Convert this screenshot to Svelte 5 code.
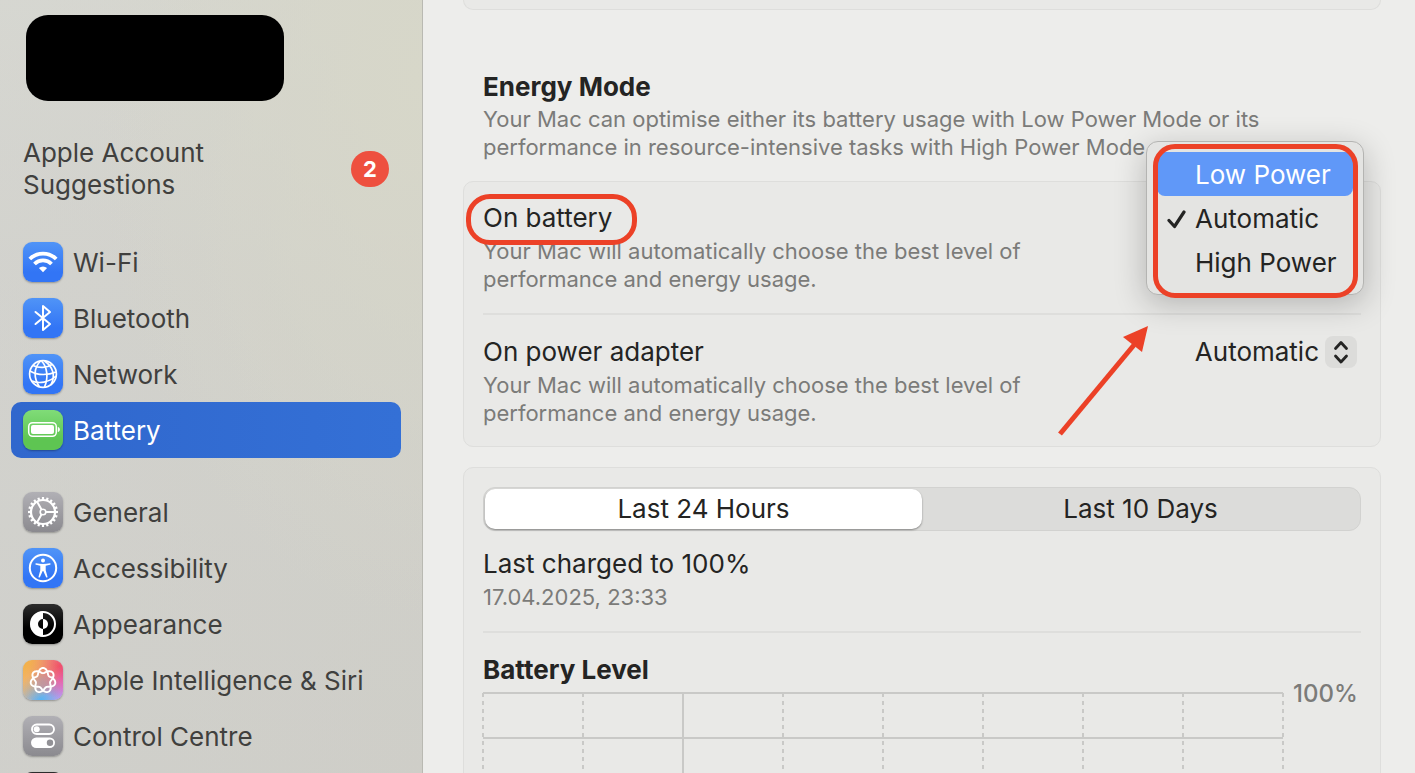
<script lang="ts">
	interface Item {
		id: string;
		label: string;
		tone: string;
	}

	const groups: Item[][] = [
		[
			{ id: 'wifi', label: 'Wi-Fi', tone: 'blue' },
			{ id: 'bluetooth', label: 'Bluetooth', tone: 'blue' },
			{ id: 'network', label: 'Network', tone: 'blue' },
			{ id: 'battery', label: 'Battery', tone: 'green' },
		],
		[
			{ id: 'general', label: 'General', tone: 'grey' },
			{ id: 'accessibility', label: 'Accessibility', tone: 'blue' },
			{ id: 'appearance', label: 'Appearance', tone: 'black' },
			{ id: 'siri', label: 'Apple Intelligence & Siri', tone: 'rainbow' },
			{ id: 'control', label: 'Control Centre', tone: 'grey' },
			{ id: 'more', label: '', tone: 'black' },
		],
	];

	const modes = ['Low Power', 'Automatic', 'High Power'];
	const ranges = ['Last 24 Hours', 'Last 10 Days'];
	const columns = [0, 1, 2, 3, 4, 5, 6, 7, 8];

	let current = $state('battery');
	let batteryMode = $state('Automatic');
	let adapterMode = $state('Automatic');
	let highlighted = $state('Low Power');
	let range = $state('Last 24 Hours');

	// seven-lobed knot, wound twice round the centre
	const knot =
		Array.from({ length: 281 }, (_, i) => {
			const t = (i / 280) * Math.PI * 4;
			const r = 9.9 + 2.6 * Math.cos(3.5 * t);
			const a = t - Math.PI / 2;
			return `${i ? 'L' : 'M'}${(20 + r * Math.cos(a)).toFixed(2)} ${(20.5 + r * Math.sin(a)).toFixed(2)}`;
		}).join('') + 'Z';

	const teeth = Array.from({ length: 20 }, (_, i) => i * 18);
</script>

{#snippet glyph(id: string)}
	<svg viewBox="0 0 40 40" fill="none" stroke="#fff" stroke-width="2" aria-hidden="true">
		{#if id === 'wifi'}
			<path d="M6.800 17a18.700 18.700 0 0 1 26.400 0" stroke-width="3.800" />
			<path d="M11.500 22a12 12 0 0 1 17 0" stroke-width="3.800" />
			<path d="M15.900 26a6 6 0 0 1 8.200 0L20 30.200Z" fill="#fff" stroke="none" />
		{:else if id === 'bluetooth'}
			<path d="M12.500 14 27 26 20 32V8l7 6-14.500 12" stroke-width="2" stroke-linejoin="round" stroke-linecap="round" />
		{:else if id === 'network'}
			<g stroke-width="1.700">
				<circle cx="20" cy="20" r="13.400" />
				<path d="M17.500 7c-7 7-7 17-1 26M18.500 7c6 6 7 17 3 26M21.500 7c9 6 11 15 6.500 24" />
				<path d="M10 11.500c6 3 14 2.500 19-1M7 17c8 5 19 4 26 1M9 27c7 3 17 1.500 24-5" />
			</g>
		{:else if id === 'battery'}
			<rect x="5.700" y="12.700" width="27.600" height="13.600" rx="4" stroke-width="1.500" />
			<rect x="8" y="15" width="23" height="9" rx="2" fill="#fff" stroke="none" />
			<path d="M34.800 17c2.800.5 2.800 4.500 0 5Z" fill="#fff" stroke="none" />
		{:else if id === 'general'}
			<circle cx="20" cy="20" r="12" stroke-width="2.200" />
			{#each teeth as angle}
				<path d="M20 5V8" stroke-width="2.200" transform="rotate({angle} 20 20)" />
			{/each}
			<circle cx="20" cy="20" r="2.800" stroke-width="1.600" />
			<path d="M23 20h9M18.500 17.400 14 9.600M18.500 22.600 14 30.400" stroke-width="2" />
		{:else if id === 'accessibility'}
			<circle cx="20" cy="20" r="13.200" stroke-width="2" />
			<circle cx="20" cy="12.600" r="2" fill="#fff" stroke="none" />
			<path d="M13 15.200c4.500 1 9.500 1 14 0 .8 0 .8 1.300 0 1.500l-4.300 1v4.500l1.800 6.500c.1 1-1.100 1.200-1.500.3L20.300 23h-.6L17 29c-.4.9-1.600.7-1.500-.3l1.800-6.500v-4.500l-4.300-1c-.8-.2-.8-1.500 0-1.500Z" fill="#fff" stroke="none" />
		{:else if id === 'appearance'}
			<circle cx="20" cy="20" r="12" stroke-width="2" />
			<path d="M20 7.500a12.500 12.500 0 0 0 0 25V25a5 5 0 0 1 0-10Z" fill="#fff" stroke="none" />
			<path d="M20 15a5 5 0 0 1 0 10Z" fill="#fff" stroke="none" />
		{:else if id === 'siri'}
			<path d={knot} stroke-width="1.900" />
		{:else if id === 'control'}
			<rect x="9" y="8.500" width="22" height="9.500" rx="4.750" stroke-width="1.900" />
			<circle cx="13.700" cy="13.200" r="3" fill="#fff" stroke="none" />
			<rect x="8" y="21.500" width="24" height="10.500" rx="5.250" fill="#fff" stroke="none" />
			<circle cx="27" cy="26.700" r="3.200" fill="#929196" stroke="none" />
		{/if}
	</svg>
{/snippet}

<div class="window">
	<aside class="sidebar">
		<div class="account"></div>

		<a class="suggestions" href="#suggestions">
			<span>Apple Account<br />Suggestions</span>
			<span class="badge">2</span>
		</a>

		<nav>
			{#each groups as group}
				<ul>
					{#each group as item}
						<li>
							<a
								class="item"
								class:item--active={current === item.id}
								href="#{item.id}"
								aria-label={item.label || 'More'}
								onclick={() => (current = item.id)}
							>
								<span class="icon icon--{item.tone}">{@render glyph(item.id)}</span>
								<span class="item__label">{item.label}</span>
							</a>
						</li>
					{/each}
				</ul>
			{/each}
		</nav>
	</aside>

	<main class="content">
		<section class="card card--tail"></section>

		<header class="intro">
			<h2>Energy Mode</h2>
			<p class="note">
				Your Mac can optimise either its battery usage with Low Power Mode or its performance in
				resource-intensive tasks with High Power Mode.
			</p>
		</header>

		<section class="card">
			<div class="row">
				<div class="row__text">
					<h3 class="ring">On battery</h3>
					<p class="note">Your Mac will automatically choose the best level of performance and energy usage.</p>
				</div>
				<div class="menu" role="menu" aria-label="On battery">
					{#each modes as mode}
						<button
							class="menu__item"
							class:menu__item--on={highlighted === mode}
							type="button"
							role="menuitemradio"
							aria-checked={batteryMode === mode}
							onmouseenter={() => (highlighted = mode)}
							onclick={() => (batteryMode = mode)}
						>
							<svg viewBox="0 0 20 20" fill="none" aria-hidden="true">
								{#if batteryMode === mode}
									<path d="M2 11.500 7.500 17.500 17 3" stroke="currentColor" stroke-width="3.200" stroke-linecap="round" stroke-linejoin="round" />
								{/if}
							</svg>
							{mode}
						</button>
					{/each}
				</div>
			</div>

			<div class="row">
				<div class="row__text">
					<h3><label for="adapter">On power adapter</label></h3>
					<p class="note">Your Mac will automatically choose the best level of performance and energy usage.</p>
				</div>
				<div class="picker">
					<select id="adapter" bind:value={adapterMode}>
						{#each modes as mode}
							<option>{mode}</option>
						{/each}
					</select>
					<svg class="picker__arrows" viewBox="0 0 32 32" fill="none" aria-hidden="true">
						<path d="M10.500 12.500 16 6.500l5.500 6M10.500 20l5.500 6 5.500-6" stroke="currentColor" stroke-width="2.800" stroke-linecap="round" stroke-linejoin="round" />
					</svg>
				</div>

				<svg class="arrow" viewBox="0 0 92 114" aria-hidden="true">
					<path d="M2 109 76 20" stroke="#ec4127" stroke-width="5" />
					<path d="M90 1 65 12l19 15Z" fill="#ec4127" />
				</svg>
			</div>
		</section>

		<section class="card card--usage">
			<div class="segments" role="radiogroup" aria-label="Period">
				{#each ranges as name}
					<label class="segment" class:segment--on={range === name}>
						<input type="radio" name="range" value={name} bind:group={range} />
						{name}
					</label>
				{/each}
			</div>

			<div class="charged">
				<h3>Last charged to 100%</h3>
				<p class="note">17.04.2025, 23:33</p>
			</div>

			<h2>Battery Level</h2>
			<div class="chart">
				<svg class="chart__grid" aria-hidden="true">
					{#each columns as n}
						<line x1="{n * 12.5}%" x2="{n * 12.5}%" y1="0" y2="180" stroke-dasharray={n === 2 ? undefined : '4 4'} />
					{/each}
					{#each [0, 45, 90, 135, 180] as y}
						<line x1="0" x2="100%" y1={y} y2={y} />
					{/each}
				</svg>
				<span class="chart__label">100%</span>
			</div>
		</section>
	</main>
</div>

<style>
	:global(body) {
		margin: 0;
	}

	.window {
		--ink: #242423;
		--muted: #7b7b79;
		--line: #dededc;
		--mark: #ec4127;
		display: flex;
		height: 100vh;
		overflow: hidden;
		background: #ededeb;
		color: var(--ink);
		font-family: Inter, 'Liberation Sans', sans-serif;
		font-size: 26px;
		line-height: 32px;
	}

	h2,
	h3,
	p,
	ul {
		margin: 0;
		padding: 0;
		list-style: none;
	}

	h2,
	h3 {
		font-size: 26px;
		line-height: 32px;
	}

	h2 {
		font-weight: 700;
	}

	h3 {
		font-weight: 400;
	}

	.note {
		color: var(--muted);
		font-size: 22px;
		line-height: 28px;
	}

	/* Sidebar */
	.sidebar {
		box-sizing: border-box;
		flex: 0 0 423px;
		padding: 15px 21px 0 11px;
		overflow: hidden;
		border-right: 1px solid #b9b9b2;
		background:
			radial-gradient(ellipse at 100% 10%, #d7d7c9 0%, rgba(215, 215, 201, 0) 55%),
			linear-gradient(100deg, rgba(216, 216, 212, 0.4), rgba(210, 209, 201, 0.5)),
			linear-gradient(#d5d6cf, #cfcfca 35%, #cbcbc7);
		color: #40403e;
	}

	.account {
		width: 258px;
		height: 86px;
		margin-left: 15px;
		border-radius: 22px;
		background: #000;
	}

	.suggestions {
		display: flex;
		align-items: center;
		justify-content: space-between;
		margin: 36px 12px 33px;
		color: inherit;
		text-decoration: none;
	}

	.badge {
		width: 38px;
		border-radius: 18px;
		background: #ee503f;
		color: #fff;
		font-size: 22px;
		font-weight: 700;
		line-height: 36px;
		text-align: center;
	}

	nav ul + ul {
		margin-top: 26px;
	}

	.item {
		display: flex;
		align-items: center;
		gap: 10px;
		height: 56px;
		padding: 0 12px;
		border-radius: 10px;
		color: inherit;
		text-decoration: none;
		white-space: nowrap;
	}

	.item__label {
		padding-top: 2px;
	}

	.item--active {
		background: linear-gradient(90deg, #3067cd, #3470d6);
		color: #fff;
	}

	.icon {
		flex: none;
		width: 40px;
		height: 40px;
		border-radius: 9px;
		box-shadow: 0 1px 2px rgba(0, 0, 0, 0.3);
	}

	.icon svg {
		display: block;
	}

	.icon--blue {
		background: linear-gradient(#5094f7, #3275f5 75%);
	}

	.icon--green {
		background: linear-gradient(#80dc78, #5ec552 75%);
	}

	.icon--grey {
		background: linear-gradient(#b1b0b5, #8b8a8f);
	}

	.icon--black {
		background: linear-gradient(#2d2d2d, #000 60%);
	}

	.icon--rainbow {
		background:
			radial-gradient(circle at 50% 55%, rgba(190, 150, 160, 0.8), rgba(190, 150, 160, 0) 45%),
			radial-gradient(circle at 0% 0%, #f3b040, rgba(243, 176, 64, 0) 75%),
			radial-gradient(circle at 90% 15%, #f0446c, rgba(240, 68, 108, 0) 65%),
			radial-gradient(circle at 45% 100%, #55b4f5, rgba(85, 180, 245, 0) 60%),
			linear-gradient(90deg, #f3b98c, #d98cf8);
	}

	/* Content */
	.content {
		flex: 1;
		min-width: 0;
		padding: 0 34px 0 40px;
		overflow: hidden;
	}

	.card {
		border: 1px solid var(--line);
		border-radius: 10px;
		background: #e9e9e7;
	}

	.card--tail {
		height: 9px;
		border-top: 0;
		border-radius: 0 0 10px 10px;
	}

	.intro {
		padding: 61px 60px 20px 20px;
	}

	.intro .note {
		padding-top: 2px;
	}

	.row {
		position: relative;
		display: flex;
		justify-content: space-between;
		margin: 0 19px;
		padding: 20px 0;
	}

	.row + .row {
		padding: 21px 0 19px;
		border-top: 2px solid var(--line);
	}

	.row__text {
		max-width: 560px;
	}

	.row__text .note {
		padding-top: 3px;
	}

	.ring {
		position: relative;
		width: max-content;
	}

	/* callout round the heading */
	.ring::after {
		content: '';
		position: absolute;
		z-index: 1;
		inset: -8px -25px -11px -17px;
		border: 5px solid var(--mark);
		border-radius: 24px;
	}

	.menu {
		position: absolute;
		z-index: 2;
		top: -41px;
		right: -3px;
		display: flex;
		flex-direction: column;
		width: 196px;
		padding: 10px;
		border: 1px solid #b4b4b2;
		border-radius: 12px;
		background: #e4e4e2;
		box-shadow: 0 8px 32px rgba(0, 0, 0, 0.24);
	}

	.menu::after {
		content: '';
		position: absolute;
		inset: 2px 5px -4px 6px;
		border: 5px solid var(--mark);
		border-radius: 22px;
		pointer-events: none;
	}

	.menu__item {
		display: flex;
		align-items: center;
		gap: 8px;
		height: 44px;
		padding: 2px 10px 0;
		border: 0;
		border-radius: 8px;
		background: none;
		color: inherit;
		font: inherit;
		white-space: nowrap;
	}

	.menu__item svg {
		flex: none;
		width: 20px;
		height: 20px;
	}

	.menu__item--on {
		background: #6098f8;
		color: #fff;
	}

	.picker {
		position: relative;
		align-self: flex-start;
		margin-right: 4px;
	}

	.picker select {
		height: 32px;
		padding: 0 38px 0 0;
		border: 0;
		appearance: none;
		background: none;
		color: inherit;
		font: inherit;
		text-align-last: right;
	}

	.picker__arrows {
		position: absolute;
		top: 0;
		right: 0;
		width: 32px;
		height: 32px;
		border-radius: 8px;
		background: #dcdcda;
		pointer-events: none;
	}

	.arrow {
		position: absolute;
		z-index: 1;
		top: 10px;
		right: 211px;
		width: 92px;
		height: 114px;
	}

	.card--usage {
		margin-top: 20px;
		padding: 19px 19px 0;
	}

	.segments {
		display: grid;
		grid-template-columns: 1fr 1fr;
		padding: 1px;
		border: 1px solid #d2d2d0;
		border-radius: 12px;
		background: #dcdcda;
	}

	.segment {
		border-radius: 10px;
		line-height: 40px;
		text-align: center;
	}

	.segment--on {
		background: #fff;
		box-shadow: 0 1px 2px rgba(0, 0, 0, 0.4);
	}

	.segment input {
		position: absolute;
		opacity: 0;
	}

	.charged {
		margin-bottom: 21px;
		padding: 17px 0 20px;
		border-bottom: 2px solid var(--line);
	}

	.charged .note {
		padding-top: 3px;
	}

	.chart {
		display: flex;
		align-items: flex-start;
		gap: 10px;
		margin-top: 7px;
	}

	.chart__grid {
		flex: 1;
		min-width: 0;
		height: 200px;
		overflow: visible;
	}

	.chart__grid line {
		stroke: #c9c9c7;
		stroke-width: 2;
	}

	.chart__label {
		width: 68px;
		margin-top: -15px;
		color: var(--muted);
		font-size: 24px;
		font-weight: 500;
	}
</style>
